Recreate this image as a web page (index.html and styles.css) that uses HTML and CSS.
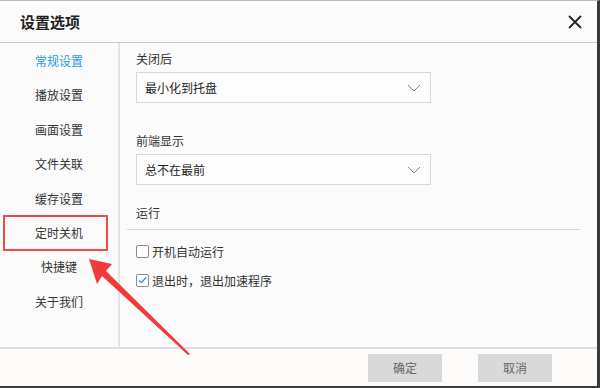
FILE: index.html
```html
<!DOCTYPE html>
<html lang="zh">
<head>
<meta charset="utf-8">
<link rel="stylesheet" href="styles.css">
</head>
<body>
<div class="dialog">
  <header class="titlebar">
    <h1 class="title">设置选项</h1>
    <svg class="close" width="14" height="14" viewBox="0 0 14 14"><path d="M1 1L13 13M13 1L1 13" stroke="#222" stroke-width="1.8" fill="none"/></svg>
  </header>
  <div class="body">
    <nav class="sidebar">
      <div class="nav-item active">常规设置</div>
      <div class="nav-item">播放设置</div>
      <div class="nav-item">画面设置</div>
      <div class="nav-item">文件关联</div>
      <div class="nav-item">缓存设置</div>
      <div class="nav-item highlight">定时关机</div>
      <div class="nav-item">快捷键</div>
      <div class="nav-item">关于我们</div>
    </nav>
    <main class="content">
      <div class="label">关闭后</div>
      <div class="select"><span>最小化到托盘</span><svg class="chev" width="14" height="8" viewBox="0 0 14 8"><path d="M1 1L7 7L13 1" stroke="#888" stroke-width="1" fill="none"/></svg></div>
      <div class="label second">前端显示</div>
      <div class="select"><span>总不在最前</span><svg class="chev" width="14" height="8" viewBox="0 0 14 8"><path d="M1 1L7 7L13 1" stroke="#888" stroke-width="1" fill="none"/></svg></div>
      <div class="section">运行</div>
      <label class="check"><span class="box"></span>开机自动运行</label>
      <label class="check"><span class="box"><svg width="12" height="12" viewBox="0 0 12 12"><path d="M2 6.5L4.8 9L10 3" stroke="#2a8de0" stroke-width="1.3" fill="none"/></svg></span>退出时，退出加速程序</label>
    </main>
  </div>
  <footer class="footer">
    <button class="btn">确定</button>
    <button class="btn">取消</button>
  </footer>
  <svg class="arrow" width="600" height="388" viewBox="0 0 600 388"><polygon points="89,259 112,264 106,271 190,354 188,355 102,276 97,284" fill="#f23a3a"/></svg>
</div>
</body>
</html>
```
FILE: styles.css
```css
* { box-sizing: border-box; margin: 0; padding: 0; }
html, body { width: 600px; height: 388px; overflow: hidden; }
body {
  font-family: "Noto Sans CJK SC", "Noto Sans", sans-serif;
  font-size: 12px;
  color: #333;
  background: #fbfbfb;
}
.dialog {
  position: relative;
  width: 600px;
  height: 388px;
  display: flex;
  flex-direction: column;
  border-top: 1px solid #b8b8b8;
  border-right: 3px solid #3a3a3a;
  border-bottom: 2px solid #3a3a3a;
  background: #fbfbfb;
}
.titlebar {
  height: 42px;
  flex: none;
  display: flex;
  align-items: center;
  justify-content: space-between;
  padding: 0 15px 0 20px;
  border-bottom: 1px solid #c8c8c8;
}
.title { font-size: 15px; font-weight: bold; color: #222; }
.close { display: block; }
.body { flex: 1; display: flex; min-height: 0; }
.sidebar {
  width: 120px;
  flex: none;
  border-right: 2px solid #e2e2e2;
  padding-top: 1px;
  display: flex;
  flex-direction: column;
}
.nav-item {
  height: 34.4px;
  line-height: 34px;
  width: 103px;
  margin-left: 4px;
  padding-left: 7px;
  text-align: center;
  font-size: 12px;
  color: #333;
}
.nav-item.active { color: #1e9af0; }
.nav-item.highlight { outline: 2px solid #f24848; outline-offset: -1px; }
.content { flex: 1; padding: 6px 0 0 16px; }
.label { height: 20px; line-height: 20px; color: #333; }
.label.second { margin-top: 28px; }
.select {
  margin-top: 3px;
  width: 295px;
  height: 31px;
  border: 1px solid #d8d8d8;
  background: #fdfdfd;
  display: flex;
  align-items: center;
  justify-content: space-between;
  padding: 0 9px 0 8px;
  color: #222;
}
.chev { display: block; }
.section {
  margin-top: 17px;
  margin-left: -9px;
  padding-left: 9px;
  height: 28px;
  line-height: 22px;
  border-bottom: 1px solid #d4d4d4;
  width: 453px;
}
.check {
  display: flex;
  align-items: center;
  height: 16px;
  margin-top: 13px;
  color: #333;
}
.box {
  width: 13px;
  height: 13px;
  border: 1px solid #8a8a8a;
  border-radius: 2px;
  background: #fff;
  margin-right: 3px;
  display: flex;
  align-items: center;
  justify-content: center;
}
.footer {
  height: 39px;
  flex: none;
  border-top: 2px solid #dedede;
  background: #fdfcfb;
  display: flex;
  justify-content: flex-end;
  align-items: center;
  gap: 36px;
  padding-right: 45px;
}
.btn {
  width: 74px;
  height: 28px;
  border: none;
  background: #d9d9d9;
  color: #666;
  font-family: inherit;
  font-size: 12px;
}
.arrow { position: absolute; left: 0; top: -1px; pointer-events: none; }
```
